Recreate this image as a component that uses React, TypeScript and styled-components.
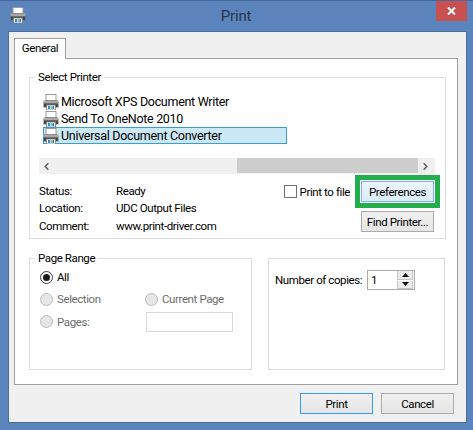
import styled, { createGlobalStyle } from "styled-components";
import { ChevronLeft, ChevronRight } from "lucide-react";

const GlobalStyle = createGlobalStyle`
  html, body {
    margin: 0;
    padding: 0;
    background: #5b84bd;
  }
  * {
    box-sizing: border-box;
  }
`;

const Window = styled.div`
  width: 473px;
  height: 430px;
  background: #5b84bd;
  border-top: 1px solid #45699b;
  font-family: Roboto, "Liberation Sans", sans-serif;
  font-size: 11.5px;
  letter-spacing: -0.4px;
  color: #000;
  overflow: hidden;
`;

const TitleBar = styled.div`
  height: 30px;
  display: grid;
  grid-template-columns: 36px 1fr 31px;
  padding-right: 6px;
`;

const TitleIcon = styled.div`
  padding: 6px 0 0 10px;
`;

const Title = styled.div`
  text-align: center;
  font-size: 15px;
  letter-spacing: -0.2px;
  line-height: 31px;
  color: #2a3647;
`;

const CloseButton = styled.div`
  width: 31px;
  height: 20px;
  background: #c75050;
  display: flex;
  align-items: center;
  justify-content: center;
`;

const Client = styled.div`
  width: 459px;
  height: 392px;
  margin-left: 8px;
  background: #f0f0f0;
  border: 1px solid #4a6f9f;
  padding: 6px 6px 0 5px;
`;

const TabStrip = styled.div`
  display: flex;
  height: 20px;
`;

const Tab = styled.div`
  width: 52px;
  height: 21px;
  background: #fff;
  border: 1px solid #a0a0a0;
  border-bottom: none;
  text-align: center;
  line-height: 19px;
  position: relative;
  z-index: 1;
`;

const TabPanel = styled.div`
  width: 444px;
  height: 327px;
  background: #fff;
  border: 1px solid #a0a0a0;
  padding: 18px 0 0 14px;
`;

const Group = styled.div<{ $width: number; $height: number }>`
  position: relative;
  width: ${(p) => p.$width}px;
  height: ${(p) => p.$height}px;
  border: 1px solid #dcdcdc;
`;

const Legend = styled.div`
  position: absolute;
  top: -9px;
  left: 5px;
  padding: 0 3px;
  background: #fff;
  line-height: 17px;
`;

const PrinterBody = styled.div`
  padding: 15px 5px 0 9px;
`;

const PrinterList = styled.div`
  margin-left: 4px;
  width: 244px;
  font-size: 12.5px;
  letter-spacing: -0.3px;
`;

const PrinterRow = styled.div<{ $selected?: boolean }>`
  height: 17px;
  display: flex;
  align-items: center;
  gap: 2px;
  white-space: nowrap;
  background: ${(p) => (p.$selected ? "#cbe8f6" : "transparent")};
  box-shadow: ${(p) => (p.$selected ? "inset 0 0 0 1px #3a9bd5" : "none")};
`;

const ScrollBar = styled.div`
  width: 396px;
  height: 16px;
  margin-top: 14px;
  background: #f0f0f0;
  display: grid;
  grid-template-columns: 198px 181px 17px;
`;

const ScrollArrow = styled.div`
  display: flex;
  align-items: center;
  color: #606060;
  padding-left: 2px;
`;

const ScrollThumb = styled.div`
  height: 15px;
  background: #cdcdcd;
`;

const DetailRow = styled.div`
  display: flex;
  justify-content: space-between;
  margin-top: 1px;
`;

const StatusGrid = styled.div`
  display: grid;
  grid-template-columns: 77px auto;
  grid-auto-rows: 17.5px;
  align-items: center;
  padding-top: 7px;
`;

const Actions = styled.div`
  display: flex;
  flex-direction: column;
  align-items: flex-end;
`;

const ActionTop = styled.div`
  display: flex;
  align-items: center;
`;

const FileCheck = styled.label`
  display: flex;
  align-items: center;
  gap: 3px;
  margin-right: 5px;
  white-space: nowrap;
`;

const CheckBox = styled.span`
  width: 13px;
  height: 13px;
  background: #fff;
  border: 1px solid #707070;
`;

const Highlight = styled.div`
  border: 5px solid #21ae4b;
  padding: 1px;
  background: #fff;
`;

const Button = styled.div<{ $variant?: "hot" | "default" }>`
  width: 73px;
  height: 21px;
  display: flex;
  align-items: center;
  justify-content: center;
  white-space: nowrap;
  border: 1px solid
    ${(p) =>
      p.$variant === "hot"
        ? "#7eb4ea"
        : p.$variant === "default"
          ? "#3399ff"
          : "#acacac"};
  background: ${(p) =>
    p.$variant === "hot"
      ? "linear-gradient(#ecf4fc, #dcecfc)"
      : "linear-gradient(#f0f0f0, #e5e5e5)"};
`;

const FindButton = styled(Button)`
  margin: 3px 6px 0 0;
`;

const BottomGroups = styled.div`
  display: flex;
  gap: 16px;
  margin-top: 19px;
`;

const RangeGrid = styled.div`
  display: grid;
  grid-template-columns: 105px auto;
  grid-template-rows: 22px 22px 23px;
  align-items: center;
  padding: 7px 0 0 10px;
`;

const RadioLabel = styled.label<{ $disabled?: boolean }>`
  display: flex;
  align-items: center;
  gap: 4px;
  color: ${(p) => (p.$disabled ? "#6d6d6d" : "#000")};
`;

const Radio = styled.span<{ $checked?: boolean; $disabled?: boolean }>`
  width: 13px;
  height: 13px;
  border-radius: 50%;
  display: flex;
  align-items: center;
  justify-content: center;
  border: 1px solid ${(p) => (p.$disabled ? "#bcbcbc" : "#3c3c3c")};
  background: ${(p) => (p.$disabled ? "#e6e6e6" : "#fff")};

  &::after {
    content: "";
    width: 7px;
    height: 7px;
    border-radius: 50%;
    background: ${(p) => (p.$checked ? "#1a1a1a" : "transparent")};
  }
`;

const PagesInput = styled.div`
  width: 87px;
  height: 20px;
  margin-left: 1px;
  background: #fff;
  border: 1px solid #d9d9d9;
`;

const CopiesRow = styled.div`
  display: flex;
  align-items: center;
  padding: 11px 0 0 6px;
`;

const CopiesLabel = styled.div`
  width: 92px;
  white-space: nowrap;
`;

const CopiesInput = styled.div`
  width: 48px;
  height: 20px;
  border: 1px solid #ababab;
  display: flex;
  justify-content: space-between;
  padding-left: 3px;
  line-height: 18px;
`;

const Spin = styled.div`
  width: 16px;
  display: grid;
  grid-template-rows: 1fr 1fr;
  gap: 1px;
  margin-right: 1px;
`;

const SpinButton = styled.div`
  background: #ececec;
  border: 1px solid #c4c4c4;
  border-top-width: 0;
  display: flex;
  align-items: center;
  justify-content: center;
`;

const Footer = styled.div`
  display: flex;
  justify-content: flex-end;
  gap: 8px;
  margin-top: 8px;
  padding-right: 6px;
`;

function PrinterIcon({ size = 16 }: { size?: number }) {
  return (
    <svg width={size} height={size} viewBox="0 0 16 16" style={{ flexShrink: 0 }}>
      <rect x="3" y="0.5" width="10" height="6" fill="#fff" stroke="#9a9a9a" />
      <path d="M2.5 6h11L15.5 8v5.5H.5V8z" fill="#6c6c6c" />
      <rect x="0.5" y="6.5" width="15" height="2.5" fill="#a9a9a9" />
      <rect x="1" y="10" width="14" height="3" fill="#474747" />
      <rect x="13" y="7.5" width="1.5" height="1" fill="#6fd06a" />
      <rect x="3.5" y="11" width="9" height="5" fill="#fff" stroke="#7c7c7c" strokeWidth="0.8" />
      <rect x="5" y="12" width="2" height="3" fill="#2f8fc9" />
      <rect x="7.5" y="12" width="1.5" height="3" fill="#7dbf9a" />
      <rect x="9.5" y="12" width="1.5" height="3" fill="#3f6f8f" />
    </svg>
  );
}

function Triangle({ up }: { up?: boolean }) {
  return (
    <svg width="7" height="4" viewBox="0 0 7 4">
      <path d={up ? "M3.5 0L7 4H0z" : "M0 0h7L3.5 4z"} fill="#111" />
    </svg>
  );
}

const printers = [
  "Microsoft XPS Document Writer",
  "Send To OneNote 2010",
  "Universal Document Converter",
];

const statusRows = [
  ["Status:", "Ready"],
  ["Location:", "UDC Output Files"],
  ["Comment:", "www.print-driver.com"],
];

export default function App() {
  return (
    <>
      <GlobalStyle />
      <Window>
        <TitleBar>
          <TitleIcon>
            <PrinterIcon />
          </TitleIcon>
          <Title>Print</Title>
          <CloseButton>
            <svg width="9" height="8" viewBox="0 0 9 8">
              <path d="M1 0.5l7 7M8 0.5l-7 7" stroke="#fff" strokeWidth="2" />
            </svg>
          </CloseButton>
        </TitleBar>
        <Client>
          <TabStrip>
            <Tab>General</Tab>
          </TabStrip>
          <TabPanel>
            <Group $width={417} $height={162}>
              <Legend>Select Printer</Legend>
              <PrinterBody>
                <PrinterList>
                  {printers.map((name, i) => (
                    <PrinterRow key={name} $selected={i === 2}>
                      <PrinterIcon />
                      {name}
                    </PrinterRow>
                  ))}
                </PrinterList>
                <ScrollBar>
                  <ScrollArrow>
                    <ChevronLeft size={11} strokeWidth={3.5} />
                  </ScrollArrow>
                  <ScrollThumb />
                  <ScrollArrow>
                    <ChevronRight size={11} strokeWidth={3.5} />
                  </ScrollArrow>
                </ScrollBar>
                <DetailRow>
                  <StatusGrid>
                    {statusRows.flatMap(([label, value]) => [
                      <span key={label}>{label}</span>,
                      <span key={value}>{value}</span>,
                    ])}
                  </StatusGrid>
                  <Actions>
                    <ActionTop>
                      <FileCheck>
                        <CheckBox />
                        Print to file
                      </FileCheck>
                      <Highlight>
                        <Button $variant="hot">Preferences</Button>
                      </Highlight>
                    </ActionTop>
                    <FindButton>Find Printer...</FindButton>
                  </Actions>
                </DetailRow>
              </PrinterBody>
            </Group>
            <BottomGroups>
              <Group $width={223} $height={112}>
                <Legend>Page Range</Legend>
                <RangeGrid>
                  <RadioLabel>
                    <Radio $checked />
                    All
                  </RadioLabel>
                  <span />
                  <RadioLabel $disabled>
                    <Radio $disabled />
                    Selection
                  </RadioLabel>
                  <RadioLabel $disabled>
                    <Radio $disabled />
                    Current Page
                  </RadioLabel>
                  <RadioLabel $disabled>
                    <Radio $disabled />
                    Pages:
                  </RadioLabel>
                  <PagesInput />
                </RangeGrid>
              </Group>
              <Group $width={177} $height={112}>
                <CopiesRow>
                  <CopiesLabel>Number of copies:</CopiesLabel>
                  <CopiesInput>
                    1
                    <Spin>
                      <SpinButton>
                        <Triangle up />
                      </SpinButton>
                      <SpinButton>
                        <Triangle />
                      </SpinButton>
                    </Spin>
                  </CopiesInput>
                </CopiesRow>
              </Group>
            </BottomGroups>
          </TabPanel>
          <Footer>
            <Button $variant="default">Print</Button>
            <Button>Cancel</Button>
          </Footer>
        </Client>
      </Window>
    </>
  );
}
